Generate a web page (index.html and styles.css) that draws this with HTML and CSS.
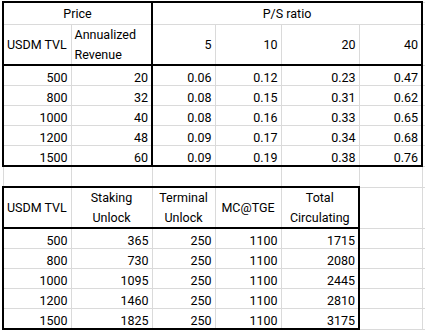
FILE: index.html
```html
<!DOCTYPE html>
<html>
<head>
<meta charset="utf-8">
<link rel="stylesheet" href="styles.css">
</head>
<body>
<table class="sheet">
  <colgroup>
    <col class="ca"><col class="cb"><col class="cc"><col class="cd"><col class="ce"><col class="cf"><col class="cg">
  </colgroup>
  <tr class="r-top">
    <td colspan="2" class="hd center tt tl">Price</td>
    <td colspan="4" class="hd center tt tl tr">P/S ratio</td>
    <td></td>
  </tr>
  <tr class="r-head">
    <td class="hd tl tb">USDM TVL</td>
    <td class="hd wrap tb">Annualized Revenue</td>
    <td class="hd num tl tb">5</td>
    <td class="hd num tb">10</td>
    <td class="hd num tb">20</td>
    <td class="hd num tb tr">40</td>
    <td></td>
  </tr>
  <tr class="r-data"><td class="num tl">500</td><td class="num">20</td><td class="num tl">0.06</td><td class="num">0.12</td><td class="num">0.23</td><td class="num tr">0.47</td><td></td></tr>
  <tr class="r-data"><td class="num tl">800</td><td class="num">32</td><td class="num tl">0.08</td><td class="num">0.15</td><td class="num">0.31</td><td class="num tr">0.62</td><td></td></tr>
  <tr class="r-data"><td class="num tl">1000</td><td class="num">40</td><td class="num tl">0.08</td><td class="num">0.16</td><td class="num">0.33</td><td class="num tr">0.65</td><td></td></tr>
  <tr class="r-data"><td class="num tl">1200</td><td class="num">48</td><td class="num tl">0.09</td><td class="num">0.17</td><td class="num">0.34</td><td class="num tr">0.68</td><td></td></tr>
  <tr class="r-data"><td class="num tl tb">1500</td><td class="num tb">60</td><td class="num tl tb">0.09</td><td class="num tb">0.19</td><td class="num tb">0.38</td><td class="num tb tr">0.76</td><td></td></tr>
  <tr class="r-gap"><td class="nobh"></td><td class="nobh"></td><td class="nobh"></td><td class="nobh"></td><td class="nobh"></td><td class="nobh"></td><td class="nobh"></td></tr>
  <tr class="r-head">
    <td class="hd tt tl tb">USDM TVL</td>
    <td class="hd center tt tb">Staking Unlock</td>
    <td class="hd center tt tb">Terminal Unlock</td>
    <td class="hd center tt tb">MC@TGE</td>
    <td class="hd center tt tb tr">Total Circulating</td>
    <td></td><td></td>
  </tr>
  <tr class="r-data"><td class="num tl">500</td><td class="num">365</td><td class="num">250</td><td class="num">1100</td><td class="num tr">1715</td><td></td><td></td></tr>
  <tr class="r-data"><td class="num tl">800</td><td class="num">730</td><td class="num">250</td><td class="num">1100</td><td class="num tr">2080</td><td></td><td></td></tr>
  <tr class="r-data"><td class="num tl">1000</td><td class="num">1095</td><td class="num">250</td><td class="num">1100</td><td class="num tr">2445</td><td></td><td></td></tr>
  <tr class="r-data"><td class="num tl">1200</td><td class="num">1460</td><td class="num">250</td><td class="num">1100</td><td class="num tr">2810</td><td></td><td></td></tr>
  <tr class="r-data"><td class="num tl tb">1500</td><td class="num tb">1825</td><td class="num tb">250</td><td class="num tb">1100</td><td class="num tb tr">3175</td><td></td><td></td></tr>
</table>
</body>
</html>
```
FILE: styles.css
```css
html, body {
  margin: 0;
  padding: 0;
  background: #ffffff;
  overflow: hidden;
}
body {
  padding: 1px 0 0 2px;
  font-family: Roboto, "Liberation Sans", sans-serif;
  font-size: 12.5px;
  color: #000;
}
.sheet {
  border-collapse: collapse;
  table-layout: fixed;
  width: 440px;
}
.ca { width: 68px; }
.cb { width: 81px; }
.cc { width: 63px; }
.cd { width: 66px; }
.ce { width: 78px; }
.cf { width: 63px; }
.cg { width: 21px; }
.sheet td {
  border: 1px solid #dadada;
  padding: 0 3px 0 3px;
  line-height: 15px;
  white-space: nowrap;
  overflow: hidden;
  vertical-align: bottom;
}
.r-top td { height: 21px; vertical-align: middle; }
.r-head td { height: 38px; }
.r-data td { height: 19px; }
.r-gap td { height: 19px; }
.sheet td.hd { vertical-align: middle; }
.sheet td.wrap { white-space: normal; line-height: 19.5px; }
.sheet td.center { text-align: center; white-space: normal; padding: 0 1px; line-height: 19.5px; }
.num { text-align: right; }
.sheet td.tt { border-top: 2px solid #000; }
.sheet td.tb { border-bottom: 2px solid #000; }
.sheet td.tl { border-left: 2px solid #000; }
.sheet td.tr { border-right: 2px solid #000; }
.sheet td.nobh { border-top-color: #dadada; border-bottom-color: #dadada; }
```
